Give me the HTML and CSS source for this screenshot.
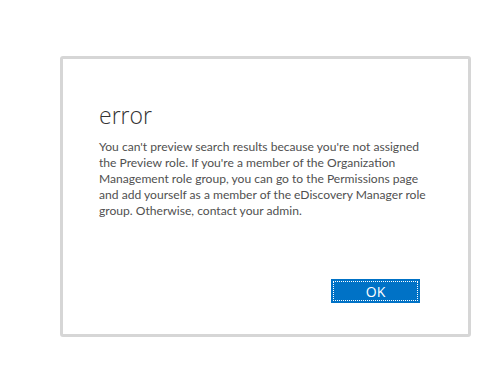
FILE: index.html
```html
<!DOCTYPE html>
<html>
<head>
<meta charset="utf-8">
<link rel="stylesheet" href="styles.css">
</head>
<body>
<div class="dialog">
  <h1 class="title">error</h1>
  <p class="message">You can't preview search results because you're not assigned<br>the Preview role. If you're a member of the Organization<br>Management role group, you can go to the Permissions page<br>and add yourself as a member of the eDiscovery Manager role<br>group. Otherwise, contact your admin.</p>
  <div class="actions">
    <button class="ok">OK</button>
  </div>
</div>
</body>
</html>
```
FILE: styles.css
```css
html, body {
  margin: 0;
  padding: 0;
  background: #ffffff;
}
body {
  font-family: "Open Sans", "Noto Sans", sans-serif;
}
.dialog {
  box-sizing: border-box;
  margin: 56px 0 0 60px;
  width: 411px;
  height: 281px;
  border: 3px solid #d6d6d6;
  border-radius: 3px;
  padding: 0 0 0 36px;
  display: flex;
  flex-direction: column;
}
.title {
  margin: 42px 0 0 0;
  font-size: 23px;
  font-weight: 300;
  line-height: 28px;
  color: #333333;
}
.message {
  margin: 10px 0 0 0;
  font-family: Lato, "Open Sans", sans-serif;
  font-size: 12.1px;
  line-height: 16px;
  color: #505050;
  white-space: nowrap;
}
.actions {
  display: flex;
  justify-content: flex-end;
  padding-right: 48px;
  margin-top: 60px;
}
.ok {
  width: 89px;
  height: 24px;
  background: #0072c6;
  border: 1px solid #0072c6;
  color: #ffffff;
  font-family: "Open Sans", sans-serif;
  font-size: 14px;
  padding: 0;
  outline: 1px dotted #ffffff;
  outline-offset: -3px;
}
```
